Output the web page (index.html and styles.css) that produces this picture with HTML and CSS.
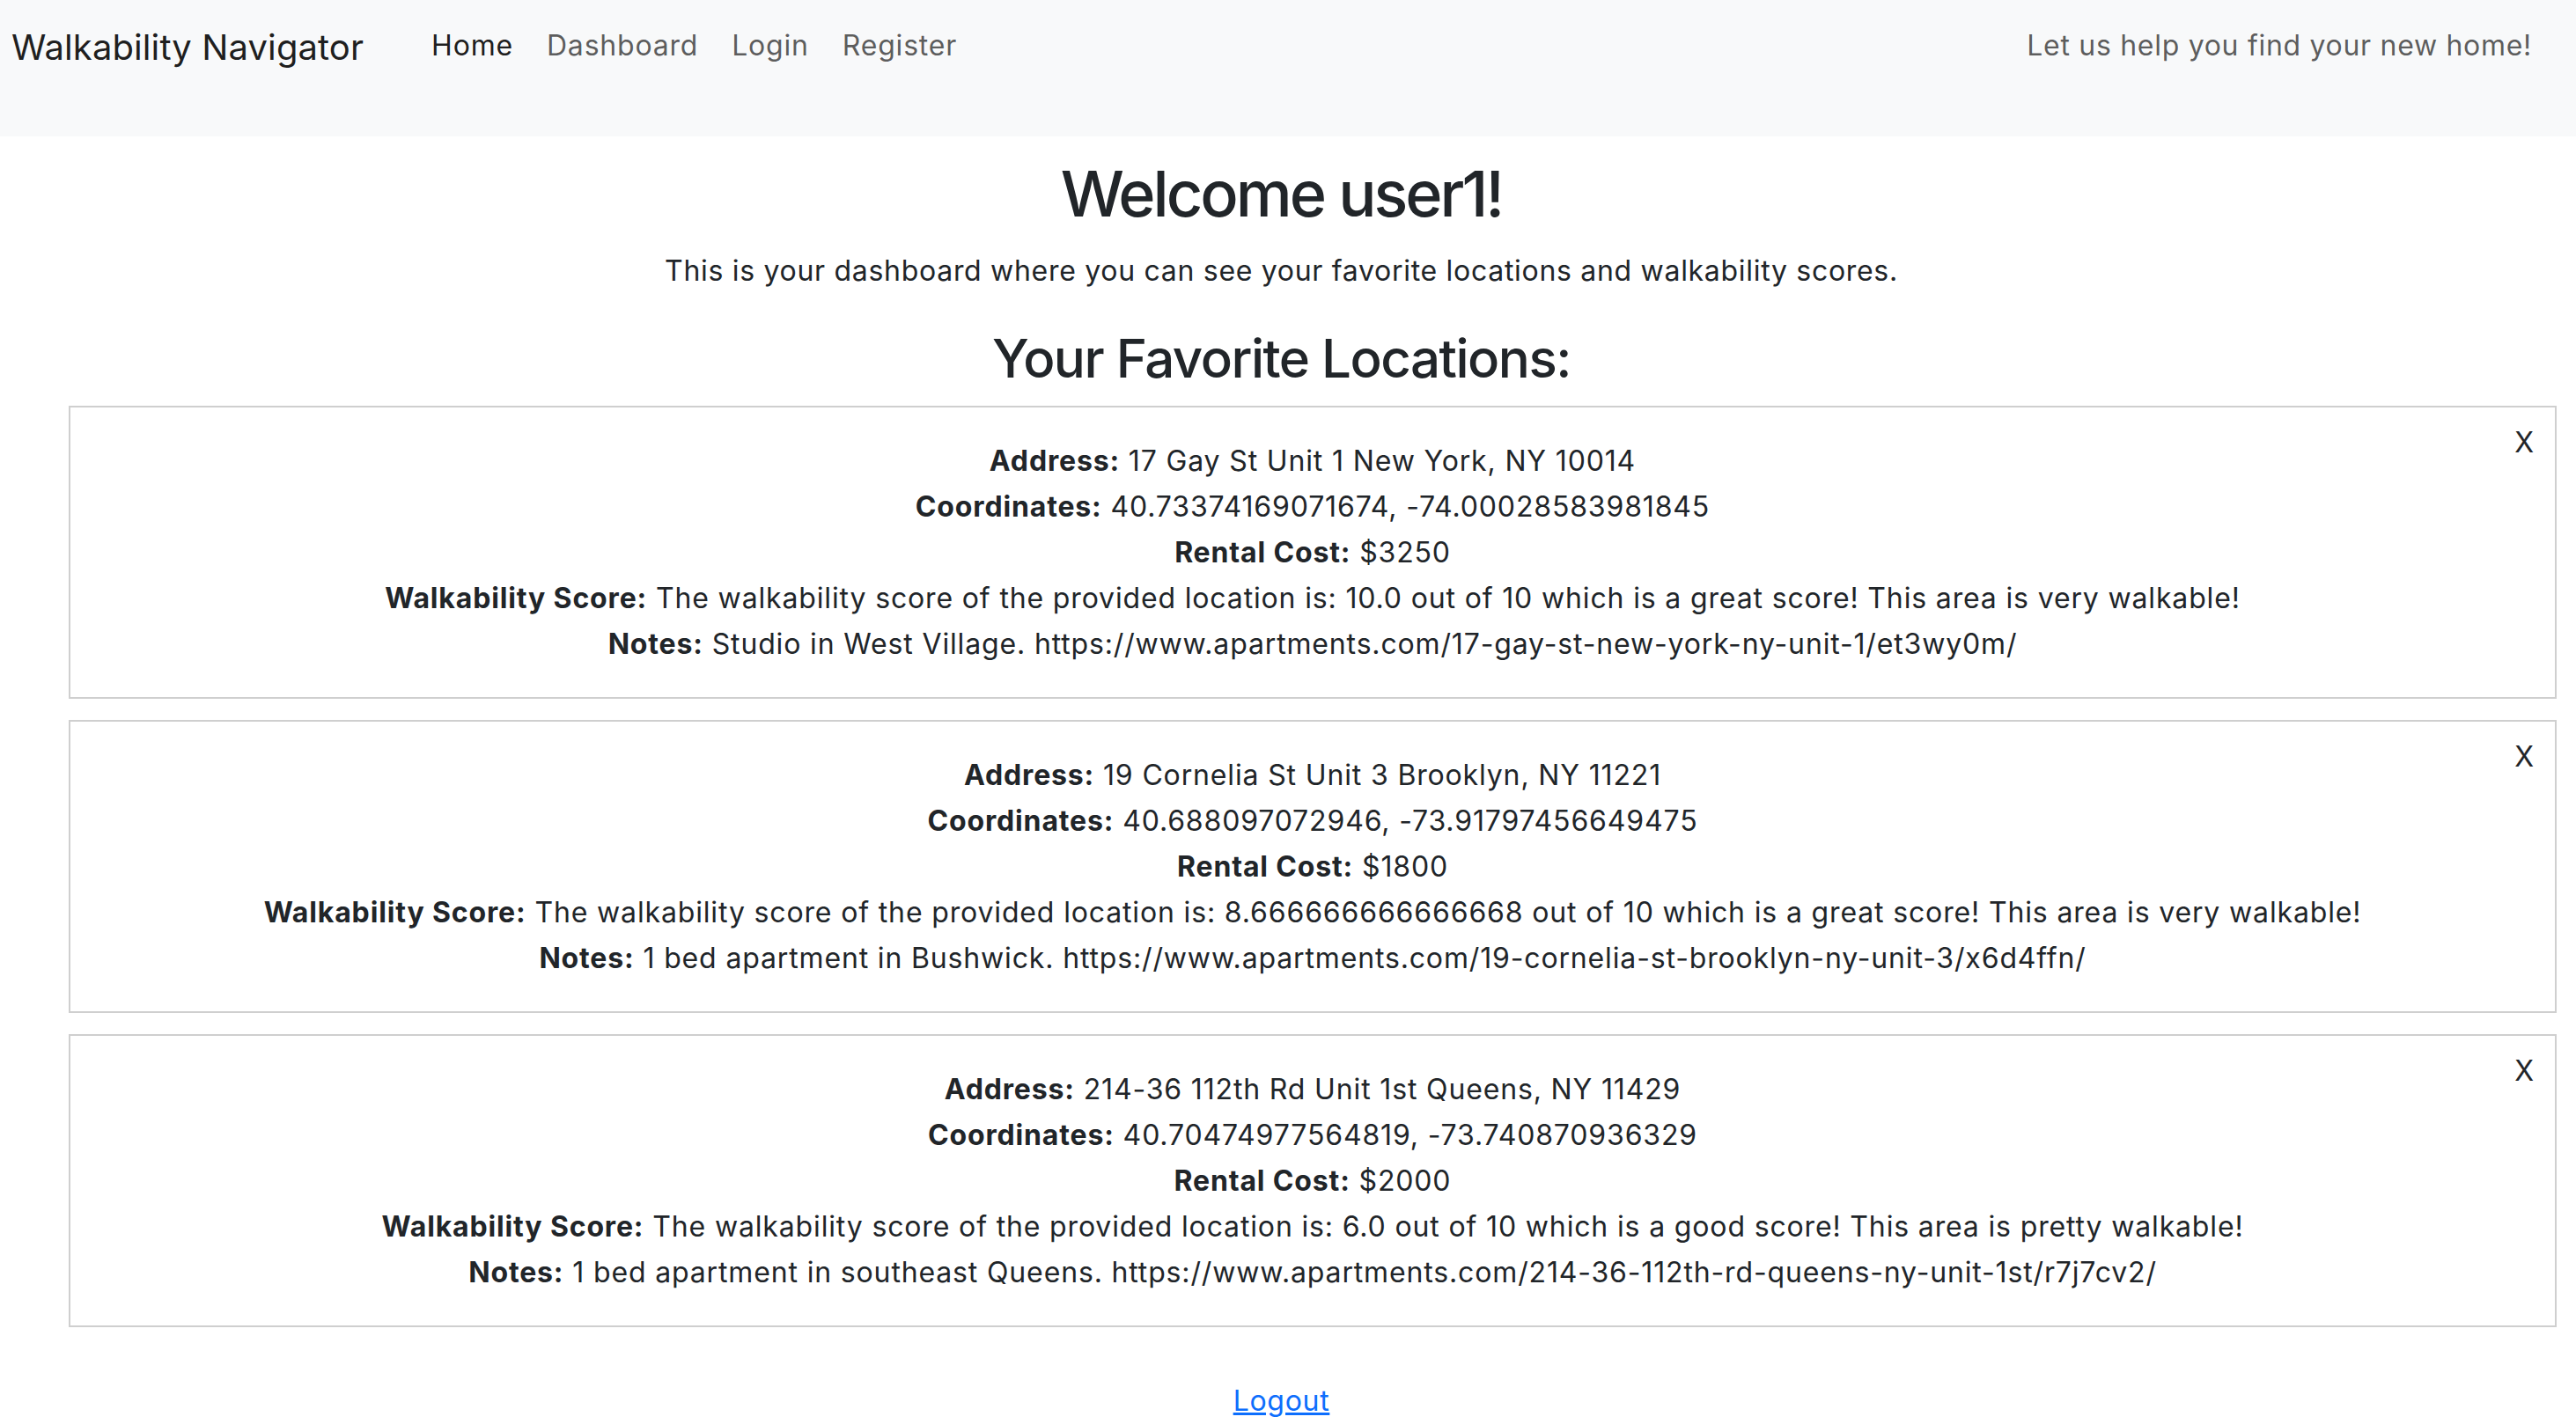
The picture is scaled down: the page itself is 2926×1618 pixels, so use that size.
FILE: index.html
```html
<!DOCTYPE html>
<html lang="en">
<head>
<meta charset="utf-8">
<title>Dashboard - Walkability Navigator</title>
<link rel="stylesheet" href="styles.css">
</head>
<body>
<nav class="navbar">
  <a class="brand" href="#">Walkability Navigator</a>
  <ul class="nav-links">
    <li><a class="nav-link active" href="#">Home</a></li>
    <li><a class="nav-link" href="#">Dashboard</a></li>
    <li><a class="nav-link" href="#">Login</a></li>
    <li><a class="nav-link" href="#">Register</a></li>
  </ul>
  <span class="navbar-text">Let us help you find your new home!</span>
</nav>
<main class="page">
  <h1 class="title">Welcome user1!</h1>
  <p class="lead">This is your dashboard where you can see your favorite locations and walkability scores.</p>
  <h2 class="subtitle">Your Favorite Locations:</h2>
  <div class="cards">
    <div class="card">
      <button class="close" type="button">X</button>
      <div class="line"><b>Address:</b> 17 Gay St Unit 1 New York, NY 10014</div>
      <div class="line"><b>Coordinates:</b> 40.73374169071674, -74.00028583981845</div>
      <div class="line"><b>Rental Cost:</b> $3250</div>
      <div class="line"><b>Walkability Score:</b> The walkability score of the provided location is: 10.0 out of 10 which is a great score! This area is very walkable!</div>
      <div class="line"><b>Notes:</b> Studio in West Village. https://www.apartments.com/17-gay-st-new-york-ny-unit-1/et3wy0m/</div>
    </div>
    <div class="card">
      <button class="close" type="button">X</button>
      <div class="line"><b>Address:</b> 19 Cornelia St Unit 3 Brooklyn, NY 11221</div>
      <div class="line"><b>Coordinates:</b> 40.688097072946, -73.91797456649475</div>
      <div class="line"><b>Rental Cost:</b> $1800</div>
      <div class="line"><b>Walkability Score:</b> The walkability score of the provided location is: 8.666666666666668 out of 10 which is a great score! This area is very walkable!</div>
      <div class="line"><b>Notes:</b> 1 bed apartment in Bushwick. https://www.apartments.com/19-cornelia-st-brooklyn-ny-unit-3/x6d4ffn/</div>
    </div>
    <div class="card">
      <button class="close" type="button">X</button>
      <div class="line"><b>Address:</b> 214-36 112th Rd Unit 1st Queens, NY 11429</div>
      <div class="line"><b>Coordinates:</b> 40.70474977564819, -73.740870936329</div>
      <div class="line"><b>Rental Cost:</b> $2000</div>
      <div class="line"><b>Walkability Score:</b> The walkability score of the provided location is: 6.0 out of 10 which is a good score! This area is pretty walkable!</div>
      <div class="line"><b>Notes:</b> 1 bed apartment in southeast Queens. https://www.apartments.com/214-36-112th-rd-queens-ny-unit-1st/r7j7cv2/</div>
    </div>
  </div>
  <div class="logout-row"><a class="logout" href="#">Logout</a></div>
</main>
</body>
</html>
```
FILE: styles.css
```css
* { box-sizing: border-box; }
html, body {
  margin: 0;
  padding: 0;
  background: #fff;
}
body {
  font-family: Inter, "Noto Sans", "Liberation Sans", sans-serif;
  font-size: 32px;
  line-height: 1.5;
  letter-spacing: 0.7px;
  color: #212529;
}
.navbar {
  display: flex;
  align-items: flex-start;
  height: 155px;
  background: #f8f9fa;
  padding: 24px 50px 0 13px;
}
.brand {
  font-size: 40px;
  line-height: 60px;
  letter-spacing: 0.1px;
  color: rgba(0,0,0,0.9);
  text-decoration: none;
  margin-right: 58px;
}
.nav-links {
  display: flex;
  list-style: none;
  margin: 0;
  padding: 4px 0 0 0;
  flex: 1;
}
.nav-link {
  display: block;
  padding: 0 19px;
  line-height: 48px;
  letter-spacing: 0.8px;
  color: rgba(0,0,0,0.65);
  text-decoration: none;
}
.nav-link.active { color: rgba(0,0,0,0.9); }
.navbar-text {
  padding-top: 4px;
  line-height: 48px;
  color: rgba(0,0,0,0.65);
}
.page {
  padding: 0 15px 40px 0;
  text-align: center;
}
.title {
  margin: 0;
  padding-top: 22px;
  font-size: 72px;
  font-weight: 500;
  letter-spacing: -3px;
  line-height: 1.2;
}
.lead {
  margin: 21px 0 0;
}
.subtitle {
  margin: 39px 0 0;
  font-size: 60px;
  font-weight: 500;
  letter-spacing: -1.5px;
  line-height: 1.2;
}
.cards {
  display: flex;
  flex-direction: column;
  gap: 24px;
  margin: 18px 7px 0 78px;
}
.card {
  position: relative;
  border: 2px solid #cfcfcf;
  padding: 35px 40px 34px;
  line-height: 52px;
  letter-spacing: 0.85px;
}
.card b { font-weight: 700; }
.close {
  position: absolute;
  top: 14px;
  right: 24px;
  border: 0;
  background: none;
  padding: 0;
  font: inherit;
  font-size: 32px;
  line-height: 52px;
  letter-spacing: 0;
  color: #212529;
}
.logout-row {
  margin-top: 60px;
}
.logout {
  color: #0d6efd;
  text-decoration: underline;
}
```
